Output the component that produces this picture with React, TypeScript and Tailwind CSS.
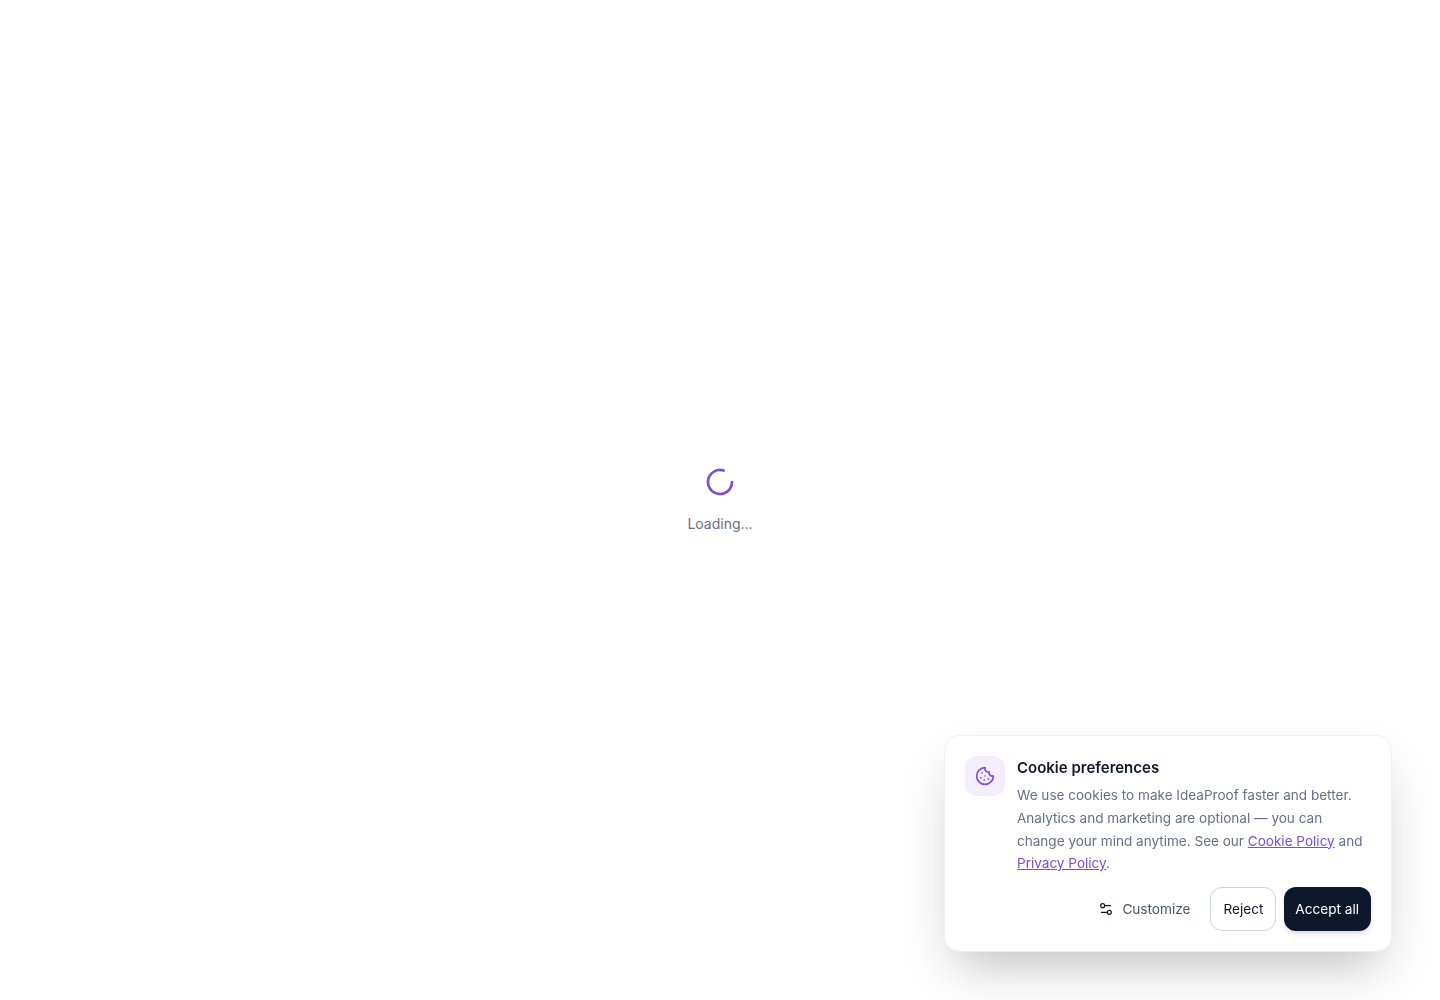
import React from 'react';
import { Cookie, LoaderCircle, Settings2 } from 'lucide-react';

const CookieBanner: React.FC = () => (
    <div className="fixed bottom-12 right-12 w-[448px] rounded-2xl border border-gray-200/60 bg-white p-5 shadow-2xl">
        <div className="flex items-start gap-3">
            <div className="flex h-10 w-10 shrink-0 items-center justify-center rounded-xl bg-[#f4edfc]">
                <Cookie className="h-5 w-5 text-[#7c4dcf]" />
            </div>
            <div className="min-w-0 flex-1">
                <h2 className="text-[15px] leading-[23px] font-semibold text-[#0f172a]">Cookie preferences</h2>
                <p className="mt-[5px] text-[13.55px] leading-[22.75px] text-[#667085]">
                    We use cookies to make IdeaProof faster and better. Analytics and marketing are optional — you can change your mind anytime. See our{' '}
                    <a href="#" className="text-[#7c4dcf] underline">Cookie Policy</a> and{' '}
                    <a href="#" className="text-[#7c4dcf] underline">Privacy Policy</a>.
                </p>
            </div>
        </div>
        <div className="mt-3 flex items-center justify-end gap-2">
            <button className="flex h-11 items-center gap-2 rounded-xl px-3 text-[13.6px] text-[#475569]">
                <Settings2 className="h-4 w-4 text-[#0f172a]" strokeWidth={1.75} />
                Customize
            </button>
            <button className="h-11 rounded-xl border border-gray-300 bg-white px-3 text-[13.6px] text-[#0f172a]">Reject</button>
            <button className="h-11 rounded-xl bg-[#0f172a] pr-3 pl-[11px] text-[13.6px] text-white shadow-md">Accept all</button>
        </div>
    </div>
);

export default function App() {
    return (
        <div className="flex min-h-screen items-center justify-center bg-white font-['Inter',sans-serif]">
            <div className="flex flex-col items-center gap-4">
                <LoaderCircle className="h-8 w-8 text-[#7c4dcf]" />
                <p className="text-sm text-[#667085]">Loading...</p>
            </div>
            <CookieBanner />
        </div>
    );
}
